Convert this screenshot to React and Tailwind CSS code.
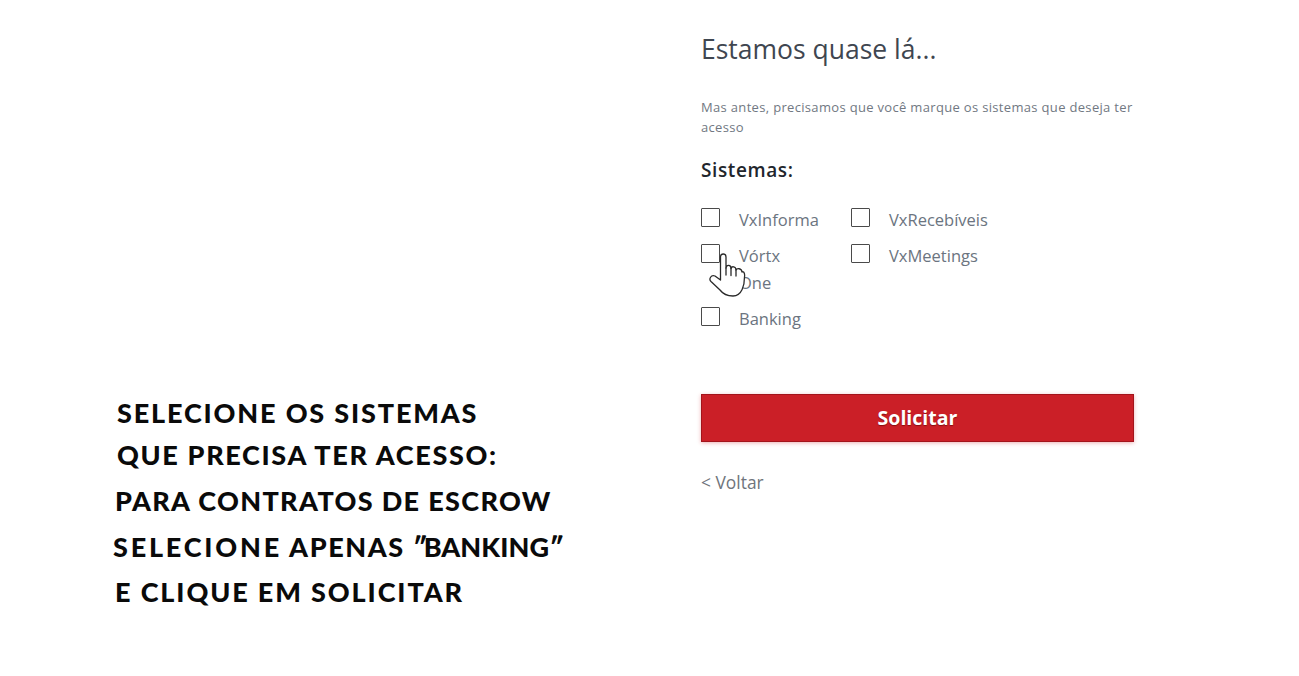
import React from "react";

function Box({ label }) {
  return (
    <label className="flex items-start">
      <span className="w-[19px] h-[19px] shrink-0 border-[1.5px] border-[#4a4a4a] rounded-[1px] bg-white mt-[1px]" />
      <span className="ml-[19px] text-[16.5px] leading-[27px] text-[#6b7480] font-['Open_Sans',sans-serif] -mt-[1px]">{label}</span>
    </label>
  );
}

function Hand() {
  return (
    <svg className="absolute left-[705px] top-[250px]" width="45" height="50" viewBox="0 0 45 50" fill="white" stroke="#2a2a2a" strokeWidth="1.3" strokeLinejoin="round" strokeLinecap="round">
      <path d="M15.5 30V7C15.5 3 21 3 21 7V18C21.500 14.500 26 14.500 26 18.500C26.500 16 31 16 31 20C32 18 36.500 18 37 22C39 21 40 24 39.500 27C39.500 35 37 46 28 46C21 46 18 44 15 40L6 31.500C3.500 29 6 24.500 10 26Z" />
      <path d="M21 18v7M26 18.500v7M31 20v6" fill="none" />
    </svg>
  );
}

export default function App() {
  return (
    <div className="relative w-[1299px] h-[676px] bg-white overflow-hidden flex">
      <div className="w-[701px] shrink-0 pt-[392px] pl-[114px] font-['Lato',sans-serif] font-black text-[27px] text-[#0a0a0a] uppercase">
        <p className="ml-[3px] leading-[42px] tracking-[1.84px]">Selecione os sistemas</p>
        <p className="ml-[3px] leading-[42px] tracking-[1.65px]">Que precisa ter acesso:</p>
        <p className="ml-[1px] leading-[46px] mt-[2px] tracking-[1.35px]">Para contratos de escrow</p>
        <p className="-ml-[1px] leading-[46px] tracking-[1.6px] whitespace-nowrap">
          <span className="tracking-[2.8px]">Selecione</span> apenas <span className="tracking-[-4px]">″</span><span className="tracking-[0.1px]">Banking</span>″
        </p>
        <p className="ml-[1px] leading-[44px] tracking-[1.88px]">E clique em solicitar</p>
      </div>
      <div className="w-[433px] font-['Open_Sans',sans-serif] pt-[31px]">
        <h1 className="text-[26.5px] leading-[36px] text-[#3f4650] font-normal">Estamos quase lá...</h1>
        <p className="mt-[30px] text-[13px] leading-[20px] text-[#717882] tracking-[0.025em]">Mas antes, precisamos que você marque os sistemas que deseja ter acesso</p>
        <p className="mt-[20px] text-[19px] leading-[26px] font-semibold text-[#22262c] tracking-[0.6px]">Sistemas:</p>
        <div className="mt-[24px] grid grid-cols-[150px_1fr] gap-y-[10px] w-[320px]">
          <Box label="VxInforma" />
          <Box label="VxRecebíveis" />
          <Box label={<span className="block w-[60px]">Vórtx One</span>} />
          <Box label="VxMeetings" />
          <Box label="Banking" />
        </div>
        <button className="mt-[62px] w-[433px] h-[48px] bg-[#cb1f27] border border-[#a3141b] text-white font-bold text-[19.5px] shadow-[0_1px_4px_rgba(203,31,39,0.35)] [text-shadow:0_1px_1px_rgba(90,0,0,0.6)]">Solicitar</button>
        <p className="mt-[28px] text-[17.4px] leading-[24px] text-[#70757c]">&lt; Voltar</p>
      </div>
      <Hand />
    </div>
  );
}
